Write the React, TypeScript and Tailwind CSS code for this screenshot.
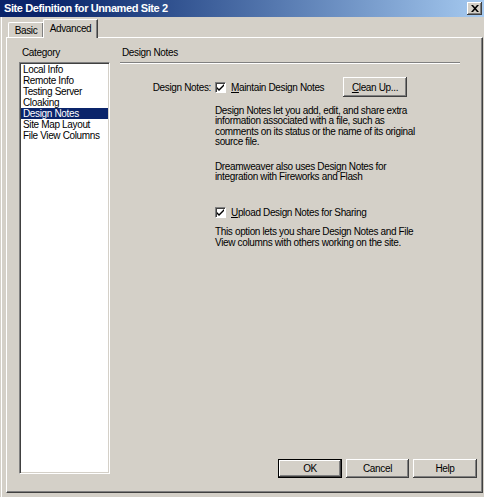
import React from "react";

const raised =
  "shadow-[inset_-1px_-1px_#404040,inset_1px_1px_#ffffff,inset_-2px_-2px_#808080]";
const raisedDefault =
  "shadow-[inset_0_0_0_1px_#000000,inset_-2px_-2px_#404040,inset_2px_2px_#ffffff,inset_-3px_-3px_#808080]";

function Check() {
  return (
    <div className="w-[11px] h-[11px] bg-white border-t border-l border-[#808080] border-b border-r border-b-white border-r-white shadow-[inset_1px_1px_#404040] flex items-center justify-center shrink-0">
      <svg width="7" height="7" viewBox="0 0 7 7">
        <path d="M0 3 L2 5 L7 0 L7 2 L2 7 L0 5 Z" fill="#000" />
      </svg>
    </div>
  );
}

function Button({ label, width, isDefault }: { label: React.ReactNode; width: string; isDefault?: boolean }) {
  return (
    <div
      className={`${width} h-[19px] bg-[#d4d0c8] flex items-center justify-center ${
        isDefault ? raisedDefault : raised
      }`}
    >
      {label}
    </div>
  );
}

export default function App() {
  const categories = [
    "Local Info",
    "Remote Info",
    "Testing Server",
    "Cloaking",
    "Design Notes",
    "Site Map Layout",
    "File View Columns",
  ];

  return (
    <div className="w-[484px] h-[497px] bg-[#d4d0c8] overflow-hidden flex flex-col font-['Liberation_Sans',Arial,sans-serif] text-[10px] tracking-[-0.35px] text-black">
      {/* title bar */}
      <div className="h-[17px] shrink-0 flex items-center justify-between bg-linear-to-r from-[#0a246a] from-10% to-[#a6caf0]">
        <span className="pl-[4px] text-white font-bold text-[11px] tracking-[-0.4px] leading-[17px]">
          Site Definition for Unnamed Site 2
        </span>
        <div className={`mr-[2px] w-[15px] h-[13px] bg-[#d4d0c8] flex items-center justify-center ${raised}`}>
          <svg width="8" height="7" viewBox="0 0 8 7">
            <path d="M0 0 L2 0 L4 2.3 L6 0 L8 0 L5 3.5 L8 7 L6 7 L4 4.7 L2 7 L0 7 L3 3.5 Z" fill="#000" />
          </svg>
        </div>
      </div>

      {/* body */}
      <div className="flex-1 ml-[1px] border-l border-white pl-[4px] pr-[1px] flex flex-col">
        {/* tabs */}
        <div className="h-[20px] shrink-0 flex items-end pl-[2px]">
          <div className="w-[35px] h-[15px] border-t border-l border-white rounded-tl-[2px] shadow-[inset_-1px_0_#808080] flex items-center justify-center">
            Basic
          </div>
          <div className="relative z-10 -mb-[1px] w-[55px] h-[19px] bg-[#d4d0c8] border-t border-l border-white border-r border-r-[#404040] rounded-tl-[2px] shadow-[inset_-1px_0_#808080] flex items-center justify-center pb-[2px]">
            Advanced
          </div>
        </div>

        {/* panel */}
        <div className="h-[456px] shrink-0 border-t border-l border-white border-r border-b border-r-[#404040] border-b-[#404040] shadow-[inset_-1px_-1px_#808080] pt-[9px] pl-[12px] flex gap-[10px]">
          {/* category column */}
          <div className="w-[91px] shrink-0 flex flex-col">
            <div className="h-[15px] leading-[12px] pl-[3px]">Category</div>
            <div className="h-[412px] bg-white border-t border-l border-[#808080] border-b border-r border-b-white border-r-white shadow-[inset_1px_1px_#404040,inset_-1px_-1px_#d4d0c8] pt-[1px] px-[1px]">
              {categories.map((c) => (
                <div
                  key={c}
                  className={`h-[11px] leading-[11px] pl-[2px] whitespace-nowrap ${
                    c === "Design Notes" ? "bg-[#0a246a] text-white" : ""
                  }`}
                >
                  {c}
                </div>
              ))}
            </div>
          </div>

          {/* settings column */}
          <div className="flex-1 flex flex-col pr-[5px] pb-[14px]">
            <div className="h-[15px] leading-[12px] pl-[2px]">Design Notes</div>
            <div className="w-[340px] border-t border-[#808080] border-b border-b-white" />

            <div className="mt-[13px] h-[20px] flex items-center">
              <div className="w-[91px] text-right">Design Notes:</div>
              <div className="ml-[4px]">
                <Check />
              </div>
              <div className="ml-[5px] w-[112px] whitespace-nowrap">
                <span className="underline">M</span>aintain Design Notes
              </div>
              <Button
                width="w-[64px] h-[20px]"
                label={
                  <span>
                    <span className="underline">C</span>lean Up...
                  </span>
                }
              />
            </div>

            <div className="mt-[9px] pl-[95px] leading-[10.4px]">
              Design Notes let you add, edit, and share extra
              <br />
              information associated with a file, such as
              <br />
              comments on its status or the name of its original
              <br />
              source file.
            </div>

            <div className="mt-[14px] pl-[95px] leading-[10.4px]">
              Dreamweaver also uses Design Notes for
              <br />
              integration with Fireworks and Flash
            </div>

            <div className="mt-[24px] pl-[95px] h-[13px] flex items-center">
              <Check />
              <div className="ml-[5px] whitespace-nowrap">
                <span className="underline">U</span>pload Design Notes for Sharing
              </div>
            </div>

            <div className="mt-[8px] pl-[95px] leading-[10.4px]">
              This option lets you share Design Notes and File
              <br />
              View columns with others working on the site.
            </div>

            <div className="mt-auto flex justify-end gap-[4px]">
              <Button width="w-[64px]" label="OK" isDefault />
              <Button width="w-[63px]" label="Cancel" />
              <Button width="w-[64px]" label="Help" />
            </div>
          </div>
        </div>
      </div>
    </div>
  );
}
